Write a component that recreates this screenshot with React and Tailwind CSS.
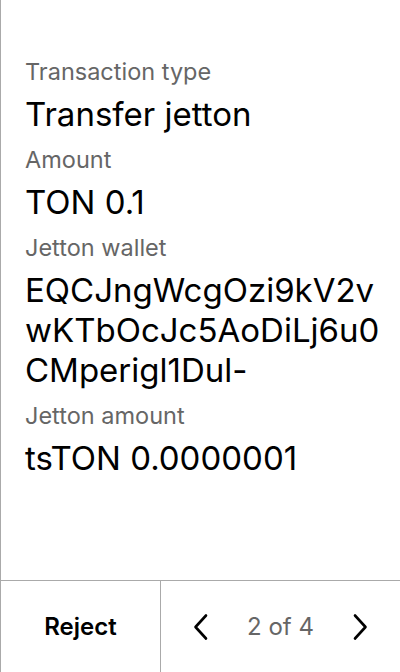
const fields = [
    { label: "Transaction type", value: "Transfer jetton" },
    { label: "Amount", value: "TON 0.1" },
    { label: "Jetton wallet", value: "EQCJngWcgOzi9kV2vwKTbOcJc5AoDiLj6u0CMperigl1Dul-" },
    { label: "Jetton amount", value: "tsTON 0.0000001" },
]

const Chevron = ({ dir }) => (
    <svg width="16" height="28" viewBox="0 0 16 28" fill="none" stroke="currentColor" strokeWidth={2.6} strokeLinecap="round" strokeLinejoin="round">
        {dir === "left" ? <path d="M13 2.5 2.5 14 13 25.5" /> : <path d="M3 2.5 13.5 14 3 25.5" />}
    </svg>
)

export default function App() {
    return (
        <div className="w-[400px] h-[672px] flex flex-col bg-white border-l border-[#aaaaaa] font-['Inter',sans-serif] text-black">
            {/* Fields */}
            <div className="flex-1 pt-[58px] pl-6 pr-5">
                {fields.map((f) => (
                    <div key={f.label} className="mb-3">
                        <div className="text-[23.5px] leading-[28px] text-[#666666] mb-2">{f.label}</div>
                        <div className="text-[33px] leading-[40px] break-all">{f.value}</div>
                    </div>
                ))}
            </div>

            {/* Bottom bar */}
            <div className="h-[92px] flex border-t border-[#aaaaaa]">
                <button className="w-[159px] flex items-center justify-center text-[24px] font-semibold">Reject</button>
                <div className="flex-1 flex items-center justify-between px-8 border-l border-[#aaaaaa]">
                    <button className="flex items-center"><Chevron dir="left" /></button>
                    <span className="text-[24px] text-[#666666]">2 of 4</span>
                    <button className="flex items-center"><Chevron dir="right" /></button>
                </div>
            </div>
        </div>
    )
}
